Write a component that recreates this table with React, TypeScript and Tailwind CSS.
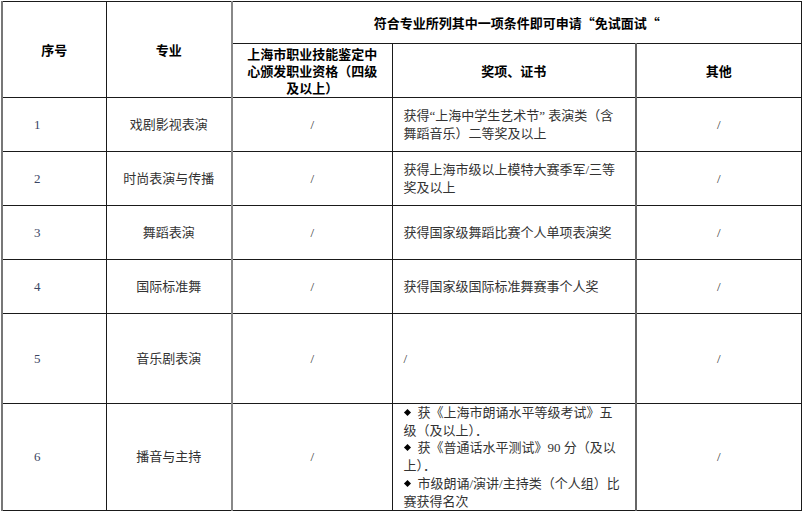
const cjk = "font-['Liberation_Serif','Noto_Sans_CJK_SC',serif]"
const hei = "font-['Noto_Sans_CJK_SC',sans-serif]"

const rows = [
  { no: '1', major: '戏剧影视表演', award: '获得“上海中学生艺术节” 表演类（含舞蹈音乐）二等奖及以上', h: 'h-[54px]' },
  { no: '2', major: '时尚表演与传播', award: '获得上海市级以上模特大赛季军/三等奖及以上', h: 'h-[54px]' },
  { no: '3', major: '舞蹈表演', award: '获得国家级舞蹈比赛个人单项表演奖', h: 'h-[54px]' },
  { no: '4', major: '国际标准舞', award: '获得国家级国际标准舞赛事个人奖', h: 'h-[54px]' },
  { no: '5', major: '音乐剧表演', award: '/', h: 'h-[90px]' },
]

const bullets = [
  '获《上海市朗诵水平等级考试》五级（及以上）．',
  '获《普通话水平测试》90 分（及以上）．',
  '市级朗诵/演讲/主持类（个人组）比赛获得名次',
]

const cell = 'border border-[#1a1a1a] p-0'

export default function App() {
  return (
    <div className="bg-white w-[802px] h-[511px] overflow-hidden pt-[1px] pl-[1px]">
      <table className={`table-fixed border-collapse w-[799px] text-[13px] leading-[17.7px] text-[#333] ${cjk}`}>
        <colgroup>
          <col className="w-[104px]" />
          <col className="w-[126px]" />
          <col className="w-[160px]" />
          <col className="w-[244px]" />
          <col className="w-[165px]" />
        </colgroup>
        <thead className={`${hei} font-bold text-black text-[13px]`}>
          <tr className="h-[42px]">
            <th rowSpan={2} className={`${cell} border-l-2 border-l-[#777] align-middle`}>序号</th>
            <th rowSpan={2} className={`${cell} align-middle`}>专业</th>
            <th colSpan={3} className={`${cell} border-l-2 border-l-[#888] align-middle`}>
              符合专业所列其中一项条件即可申请“免试面试“
            </th>
          </tr>
          <tr className="h-[54px]">
            <th className={`${cell} border-l-2 border-l-[#888] px-[11px] leading-[17px] align-middle`}>
              上海市职业技能鉴定中心颁发职业资格（四级及以上）
            </th>
            <th className={`${cell} align-middle`}>奖项、证书</th>
            <th className={`${cell} border-l-2 border-l-[#666] align-middle`}>其他</th>
          </tr>
        </thead>
        <tbody>
          {rows.map((r) => (
            <tr key={r.no} className={r.h}>
              <td className={`${cell} border-l-2 border-l-[#777] pl-[31px] text-[#3b4663]`}>{r.no}</td>
              <td className={`${cell} text-center`}>{r.major}</td>
              <td className={`${cell} border-l-2 border-l-[#888] text-center`}>/</td>
              <td className={`${cell} pl-[11px] pr-[14px]`}>{r.award}</td>
              <td className={`${cell} border-l-2 border-l-[#666] text-center`}>/</td>
            </tr>
          ))}
          <tr className="h-[107px]">
            <td className={`${cell} border-l-2 border-l-[#777] pl-[31px] text-[#3b4663]`}>6</td>
            <td className={`${cell} text-center`}>播音与主持</td>
            <td className={`${cell} border-l-2 border-l-[#888] text-center`}>/</td>
            <td className={`${cell} pl-[11px] pr-[14px] py-0`}>
              {bullets.map((b) => (
                <p key={b}>
                  {/* small black diamond bullet */}
                  <span className="inline-block w-[5px] h-[5px] bg-black rotate-45 align-[2px] ml-[1px] mr-[8px]" />
                  {b}
                </p>
              ))}
            </td>
            <td className={`${cell} border-l-2 border-l-[#666] text-center`}>/</td>
          </tr>
        </tbody>
      </table>
    </div>
  )
}
